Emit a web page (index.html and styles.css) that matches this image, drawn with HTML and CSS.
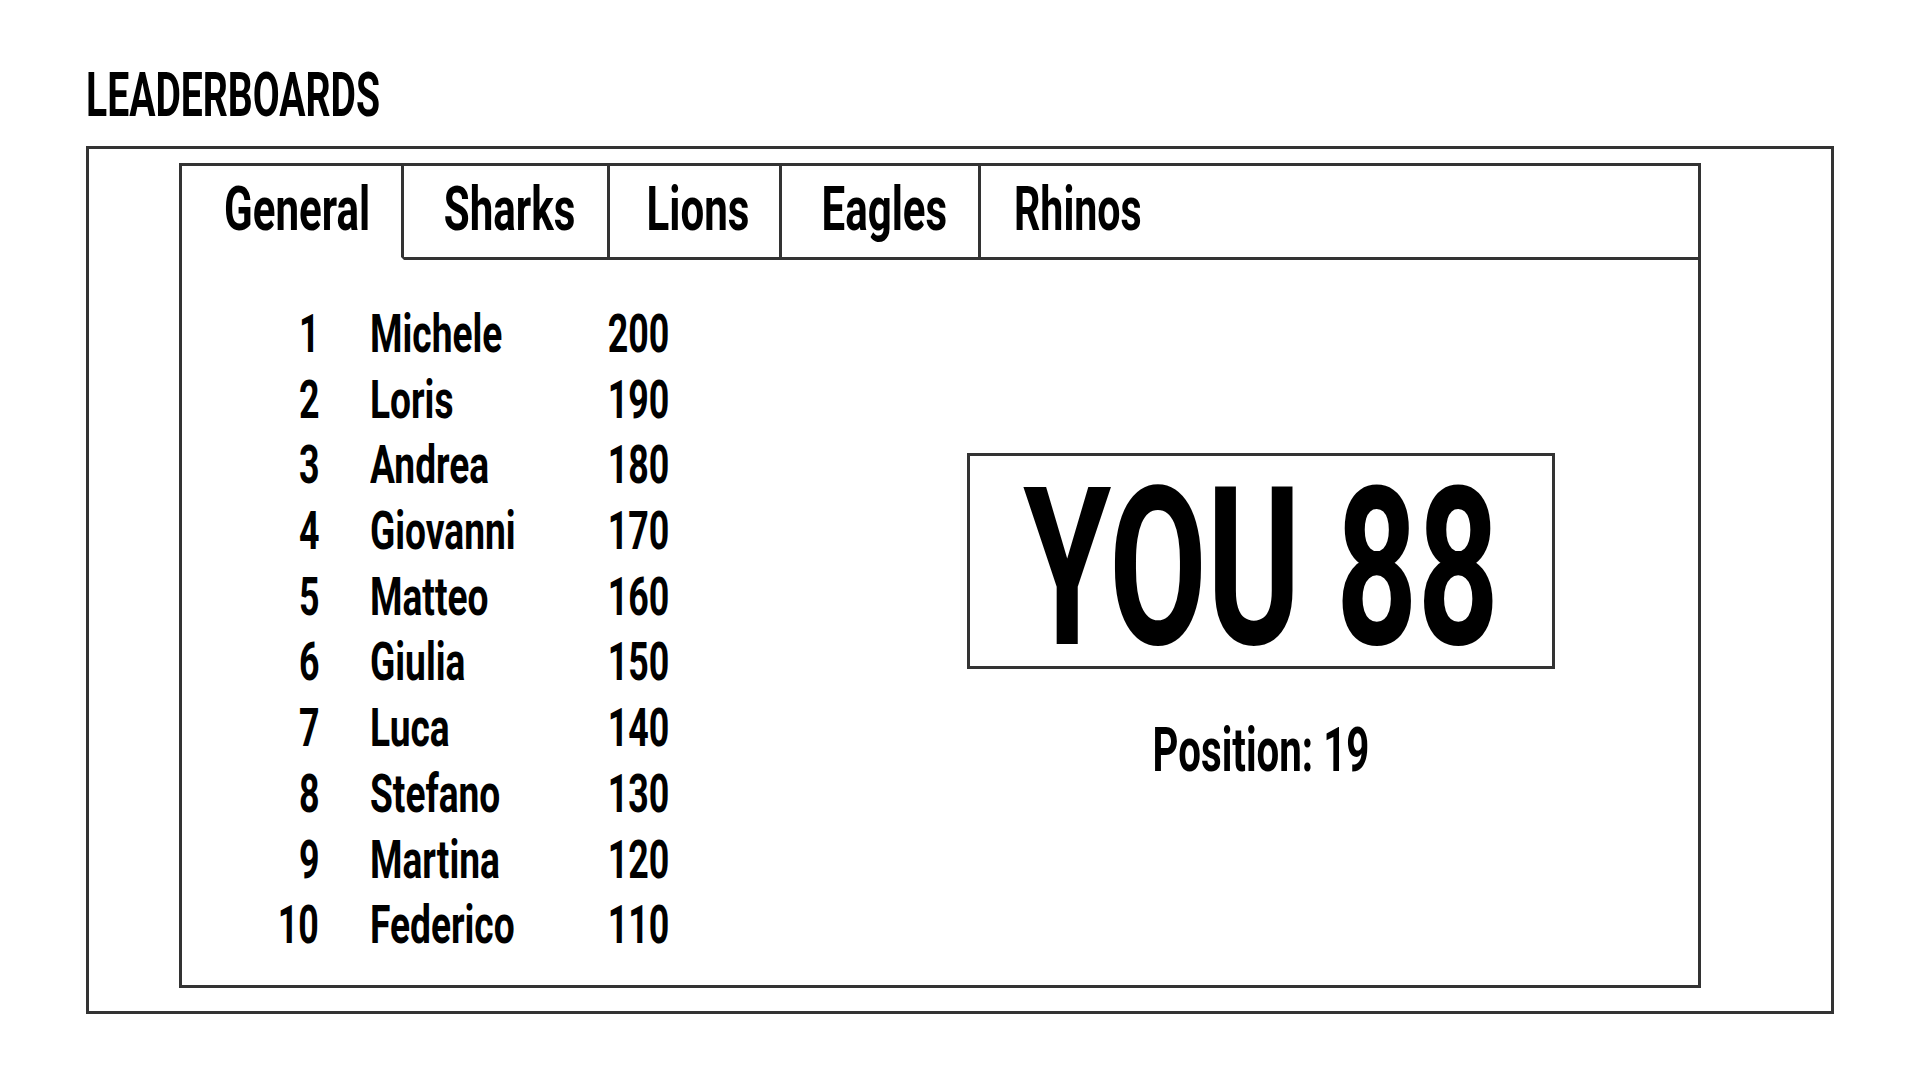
FILE: index.html
```html
<!DOCTYPE html>
<html lang="en">
<head>
<meta charset="utf-8">
<title>Leaderboards</title>
<link rel="stylesheet" href="styles.css">
</head>
<body>
<h1 class="title"><span class="cond">LEADERBOARDS</span></h1>
<div class="frame">
  <div class="panel">
    <div class="tabs">
      <div class="tab tab-general active"><span class="cond">General</span></div>
      <div class="tab tab-sharks"><span class="cond">Sharks</span></div>
      <div class="tab tab-lions"><span class="cond">Lions</span></div>
      <div class="tab tab-eagles"><span class="cond">Eagles</span></div>
      <div class="tab tab-rhinos"><span class="cond">Rhinos</span></div>
    </div>
    <div class="panel-body">
      <div class="list">
        <span class="rank"><span class="cond">1</span></span><span class="name"><span class="cond">Michele</span></span><span class="pts"><span class="cond">200</span></span>
        <span class="rank"><span class="cond">2</span></span><span class="name"><span class="cond">Loris</span></span><span class="pts"><span class="cond">190</span></span>
        <span class="rank"><span class="cond">3</span></span><span class="name"><span class="cond">Andrea</span></span><span class="pts"><span class="cond">180</span></span>
        <span class="rank"><span class="cond">4</span></span><span class="name"><span class="cond">Giovanni</span></span><span class="pts"><span class="cond">170</span></span>
        <span class="rank"><span class="cond">5</span></span><span class="name"><span class="cond">Matteo</span></span><span class="pts"><span class="cond">160</span></span>
        <span class="rank"><span class="cond">6</span></span><span class="name"><span class="cond">Giulia</span></span><span class="pts"><span class="cond">150</span></span>
        <span class="rank"><span class="cond">7</span></span><span class="name"><span class="cond">Luca</span></span><span class="pts"><span class="cond">140</span></span>
        <span class="rank"><span class="cond">8</span></span><span class="name"><span class="cond">Stefano</span></span><span class="pts"><span class="cond">130</span></span>
        <span class="rank"><span class="cond">9</span></span><span class="name"><span class="cond">Martina</span></span><span class="pts"><span class="cond">120</span></span>
        <span class="rank"><span class="cond">10</span></span><span class="name"><span class="cond">Federico</span></span><span class="pts"><span class="cond">110</span></span>
      </div>
      <div class="me">
        <div class="score-box"><span class="cond">YOU 88</span></div>
        <div class="position"><span class="cond">Position: 19</span></div>
      </div>
    </div>
  </div>
</div>
</body>
</html>
```
FILE: styles.css
```css
* { box-sizing: border-box; }

html, body {
  margin: 0;
  background: #ffffff;
}

body {
  padding: 65px 0 0 86px;
  font-family: Roboto, "Liberation Sans", sans-serif;
  font-weight: 700;
  color: #000;
  width: 1920px;
  height: 1080px;
  overflow: hidden;
}

.cond {
  display: inline-block;
  white-space: nowrap;
  transform-origin: left center;
}

.title {
  margin: 0 0 20px 0;
  font-size: 60.5px;
  line-height: 61px;
  font-weight: 700;
  height: 61px;
}
.title .cond { transform: scaleX(0.646); }

.frame {
  width: 1748px;
  height: 868px;
  border: 3px solid #333;
  padding: 14px 130px 23px 90px;
}

.panel {
  height: 100%;
  border: 3px solid #333;
  display: flex;
  flex-direction: column;
}

.tabs {
  display: flex;
  height: 94px;
  flex: none;
}

.tab {
  height: 94px;
  border-bottom: 3px solid #333;
  border-right: 3px solid #333;
  font-size: 60.5px;
  line-height: 87px;
  padding: 0 0 4px 7px;
  display: flex;
  justify-content: center;
}
.tab .cond { transform: scaleX(0.695); transform-origin: center center; }
.tab.active { border-bottom-color: transparent; }
.tab-general { width: 222px; padding-left: 12px; }
.tab-sharks { width: 206px; padding-left: 9px; }
.tab-lions { width: 172px; }
.tab-eagles { width: 199px; padding-left: 8px; }
.tab-rhinos {
  flex: 1;
  border-right: none;
  justify-content: flex-start;
  padding-left: 33px;
}
.tab-rhinos .cond { transform: scaleX(0.68); transform-origin: left center; }

.panel-body {
  flex: 1;
  display: grid;
  grid-template-columns: 642px 1fr;
}

.list {
  padding: 42px 0 0 1px;
  display: grid;
  grid-template-columns: 136px 250px 100px;
  grid-auto-rows: 65.7px;
  align-content: start;
  font-size: 53px;
  line-height: 65.7px;
}
.list .cond { transform: scaleX(0.675); }
.rank { text-align: right; }
.rank .cond, .pts .cond { transform-origin: right center; }
.name { padding-left: 51px; }
.name .cond { transform: scaleX(0.70); }
.pts { text-align: right; }

.me {
  padding-top: 193px;
  display: flex;
  flex-direction: column;
  align-items: center;
}

.score-box {
  width: 588px;
  height: 216px;
  border: 3px solid #333;
  display: flex;
  justify-content: center;
  font-size: 221px;
  line-height: 194px;
  padding-top: 16px;
}
.score-box .cond { transform: scaleX(0.643); transform-origin: center center; }

.position {
  margin-top: 51px;
  font-size: 60.5px;
  line-height: 61px;
  display: flex;
  justify-content: center;
  width: 100%;
}
.position .cond { transform: scaleX(0.665); transform-origin: center center; }
```
